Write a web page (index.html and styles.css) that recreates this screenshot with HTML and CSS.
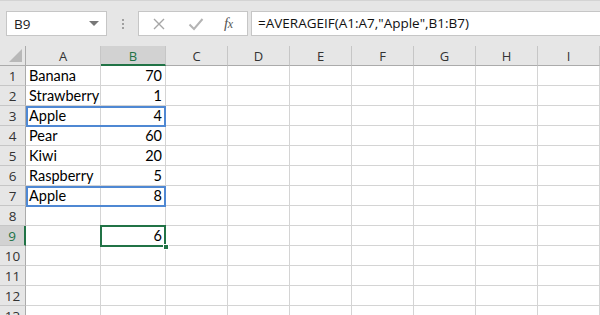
FILE: index.html
```html
<!DOCTYPE html>
<html>
<head>
<meta charset="utf-8">
<link rel="stylesheet" href="styles.css">
</head>
<body>
<div class="app">
  <div class="toolbar">
    <div class="namebox">
      <span class="name">B9</span>
      <span class="caret"></span>
    </div>
    <div class="grip"><span></span><span></span><span></span></div>
    <div class="fbtns">
      <svg class="ico" width="14" height="14" viewBox="0 0 14 14"><path d="M2 2 L12 12 M12 2 L2 12" stroke="#a6a6a6" stroke-width="1.4" fill="none"/></svg>
      <svg class="ico" width="16" height="14" viewBox="0 0 16 14"><path d="M1.5 7.5 L6 12 L14.5 2" stroke="#b4b4b4" stroke-width="2" fill="none"/></svg>
      <span class="fx">f<i>x</i></span>
    </div>
    <div class="formula">=AVERAGEIF(A1:A7,"Apple",B1:B7)</div>
  </div>
  <div class="sheet">
    <div class="grid">
      <div class="corner"><span class="tri"></span></div>
      <div class="ch">A</div><div class="ch sel">B</div><div class="ch">C</div><div class="ch">D</div><div class="ch">E</div><div class="ch">F</div><div class="ch">G</div><div class="ch">H</div><div class="ch">I</div>

      <div class="rh">1</div><div class="c">Banana</div><div class="c n">70</div><div class="c"></div><div class="c"></div><div class="c"></div><div class="c"></div><div class="c"></div><div class="c"></div><div class="c"></div>
      <div class="rh">2</div><div class="c">Strawberry</div><div class="c n">1</div><div class="c"></div><div class="c"></div><div class="c"></div><div class="c"></div><div class="c"></div><div class="c"></div><div class="c"></div>
      <div class="rh">3</div><div class="c">Apple</div><div class="c n">4</div><div class="c"></div><div class="c"></div><div class="c"></div><div class="c"></div><div class="c"></div><div class="c"></div><div class="c"></div>
      <div class="rh">4</div><div class="c">Pear</div><div class="c n">60</div><div class="c"></div><div class="c"></div><div class="c"></div><div class="c"></div><div class="c"></div><div class="c"></div><div class="c"></div>
      <div class="rh">5</div><div class="c">Kiwi</div><div class="c n">20</div><div class="c"></div><div class="c"></div><div class="c"></div><div class="c"></div><div class="c"></div><div class="c"></div><div class="c"></div>
      <div class="rh">6</div><div class="c">Raspberry</div><div class="c n">5</div><div class="c"></div><div class="c"></div><div class="c"></div><div class="c"></div><div class="c"></div><div class="c"></div><div class="c"></div>
      <div class="rh">7</div><div class="c">Apple</div><div class="c n">8</div><div class="c"></div><div class="c"></div><div class="c"></div><div class="c"></div><div class="c"></div><div class="c"></div><div class="c"></div>
      <div class="rh">8</div><div class="c"></div><div class="c n"></div><div class="c"></div><div class="c"></div><div class="c"></div><div class="c"></div><div class="c"></div><div class="c"></div><div class="c"></div>
      <div class="rh sel">9</div><div class="c"></div><div class="c n">6</div><div class="c"></div><div class="c"></div><div class="c"></div><div class="c"></div><div class="c"></div><div class="c"></div><div class="c"></div>
      <div class="rh">10</div><div class="c"></div><div class="c n"></div><div class="c"></div><div class="c"></div><div class="c"></div><div class="c"></div><div class="c"></div><div class="c"></div><div class="c"></div>
      <div class="rh">11</div><div class="c"></div><div class="c n"></div><div class="c"></div><div class="c"></div><div class="c"></div><div class="c"></div><div class="c"></div><div class="c"></div><div class="c"></div>
      <div class="rh">12</div><div class="c"></div><div class="c n"></div><div class="c"></div><div class="c"></div><div class="c"></div><div class="c"></div><div class="c"></div><div class="c"></div><div class="c"></div>
      <div class="rh">13</div><div class="c"></div><div class="c n"></div><div class="c"></div><div class="c"></div><div class="c"></div><div class="c"></div><div class="c"></div><div class="c"></div><div class="c"></div>
    </div>
    <div class="range r3"></div>
    <div class="range r7"></div>
    <div class="active"><span class="handle"></span></div>
  </div>
</div>
</body>
</html>
```

FILE: styles.css
```css
* { box-sizing: border-box; }
html, body { margin: 0; padding: 0; }
body {
  width: 600px;
  height: 315px;
  overflow: hidden;
  background: #e6e6e6;
  font-family: Lato, "Open Sans", sans-serif;
}
.app { width: 600px; }
.toolbar {
  height: 46px;
  display: flex;
  align-items: flex-start;
  padding: 11px 0 0 6px;
  border-top: 1px solid #d4d4d4;
  margin-top: 0;
}
.namebox {
  width: 101px;
  height: 25px;
  background: #fff;
  border: 1px solid #c6c6c6;
  display: flex;
  align-items: center;
  justify-content: space-between;
  padding: 0 7px 0 7px;
  margin-top: -1px;
}
.name {
  font-family: "Open Sans", sans-serif;
  font-size: 13.5px;
  color: #222;
}
.caret {
  width: 0; height: 0;
  border-left: 5px solid transparent;
  border-right: 5px solid transparent;
  border-top: 5px solid #777;
}
.grip {
  width: 31px;
  height: 25px;
  display: flex;
  flex-direction: column;
  align-items: center;
  justify-content: center;
  gap: 2px;
  margin-top: -1px;
}
.grip span { width: 2px; height: 2px; background: #a0a0a0; }
.fbtns {
  width: 110px;
  height: 25px;
  background: #fff;
  border: 1px solid #c6c6c6;
  display: flex;
  align-items: center;
  padding: 0 0 0 13px;
  margin-top: -1px;
}
.fbtns .ico { margin-right: 22px; }
.fbtns .ico + .ico { margin-right: 20px; }
.fx {
  font-family: "Liberation Serif", serif;
  font-style: italic;
  font-size: 15px;
  color: #555;
  letter-spacing: -0.5px;
}
.fx i { font-size: 12px; }
.formula {
  margin-left: 3px;
  flex: 1;
  height: 25px;
  background: #fff;
  border: 1px solid #c6c6c6;
  border-right: none;
  margin-top: -1px;
  font-family: "Open Sans", sans-serif;
  font-size: 13.5px;
  color: #111;
  padding: 2px 0 0 6px;
  line-height: 19px;
}
.sheet { position: relative; }
.grid {
  display: grid;
  grid-template-columns: 26px 75px 65px repeat(7, 62px);
  grid-auto-rows: 20px;
}
.corner, .ch, .rh {
  background: #e6e6e6;
  color: #333;
  font-family: "Open Sans", sans-serif;
  font-size: 13px;
  display: flex;
  align-items: center;
  justify-content: center;
}
.corner {
  border-right: 1px solid #ababab;
  border-bottom: 1px solid #ababab;
  position: relative;
}
.tri {
  position: absolute;
  right: 3px;
  bottom: 3px;
  width: 0; height: 0;
  border-left: 13px solid transparent;
  border-bottom: 13px solid #b8b8b8;
}
.ch {
  border-right: 1px solid #c6c6c6;
  border-bottom: 1px solid #ababab;
  padding-top: 1px;
}
.ch.sel {
  background: #d2d2d2;
  color: #217346;
  border-bottom: 2px solid #217346;
  padding-top: 2px;
}
.rh {
  border-right: 1px solid #ababab;
  border-bottom: 1px solid #c6c6c6;
  font-size: 13.5px;
}
.rh.sel {
  background: #d2d2d2;
  color: #217346;
  border-right: 2px solid #217346;
}
.c {
  background: #fff;
  border-right: 1px solid #d4d4d4;
  border-bottom: 1px solid #d4d4d4;
  font-size: 14.5px;
  color: #000;
  padding: 0 0 0 3px;
  line-height: 19px;
  white-space: nowrap;
}
.c.n { text-align: right; padding: 0 3px 0 0; }
.range {
  position: absolute;
  left: 26px;
  width: 140px;
  height: 21px;
  border: 2px solid #4f88d3;
}
.r3 { top: 60px; }
.r7 { top: 140px; }
.active {
  position: absolute;
  left: 100px;
  top: 179px;
  width: 66px;
  height: 22px;
  border: 2px solid #217346;
}
.handle {
  position: absolute;
  right: -5px;
  bottom: -5px;
  width: 6px;
  height: 6px;
  background: #217346;
  border: 1px solid #fff;
}
```
